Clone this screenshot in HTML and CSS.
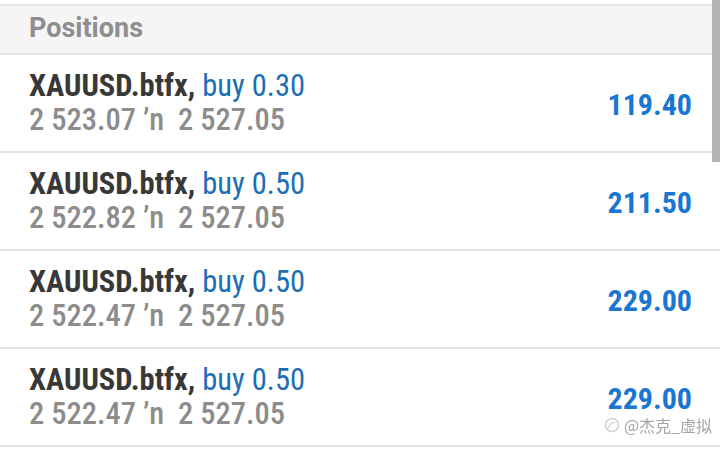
FILE: index.html
```html
<!DOCTYPE html>
<html lang="en">
  <head>
    <meta charset="UTF-8" />
    <meta name="viewport" content="width=device-width, initial-scale=1.0" />
    <title>Positions</title>

    <link rel="stylesheet" href="styles.css">
  </head>

  <body>
    <section class="liste">
      <h2 class="overskrift">Positions</h2>

      <article class="pos">
        <div class="info">
          <p class="linje1"><b>XAUUSD.btfx,</b> <span class="buy">buy 0.30</span></p>
          <p class="linje2">2 523.07 ’n&nbsp; 2 527.05</p>
        </div>
        <p class="profit">119.40</p>
      </article>

      <article class="pos">
        <div class="info">
          <p class="linje1"><b>XAUUSD.btfx,</b> <span class="buy">buy 0.50</span></p>
          <p class="linje2">2 522.82 ’n&nbsp; 2 527.05</p>
        </div>
        <p class="profit">211.50</p>
      </article>

      <article class="pos">
        <div class="info">
          <p class="linje1"><b>XAUUSD.btfx,</b> <span class="buy">buy 0.50</span></p>
          <p class="linje2">2 522.47 ’n&nbsp; 2 527.05</p>
        </div>
        <p class="profit">229.00</p>
      </article>

      <article class="pos">
        <div class="info">
          <p class="linje1"><b>XAUUSD.btfx,</b> <span class="buy">buy 0.50</span></p>
          <p class="linje2">2 522.47 ’n&nbsp; 2 527.05</p>
        </div>
        <p class="profit">229.00</p>
      </article>
    </section>

    <div class="scrollbar"></div>

    <div class="vandmaerke">
      <svg width="16" height="16" viewBox="0 0 16 16">
        <circle cx="8" cy="8" r="6.5" fill="none" stroke="#d4d4d4" stroke-width="1.6" />
        <path d="M4.5 10.5 Q8 3.5 11.5 6" fill="none" stroke="#d4d4d4" stroke-width="1.4" />
      </svg>
      <span>@杰克_虚拟</span>
    </div>
  </body>
</html>
```

FILE: styles.css
```css
body {
  margin: 0;
  background-color: white;
  font-family: "Roboto Condensed", Roboto, sans-serif;
  overflow: hidden;
}
p {
  margin: 0;
}

.liste {
  padding-top: 4px;
}
.overskrift {
  margin: 0;
  height: 47px;
  padding-left: 29px;
  border-top: 2px solid #e4e4e4;
  border-bottom: 2px solid #e4e4e4;
  background-color: #f5f5f5;
  font-family: Roboto, sans-serif;
  font-size: 27px;
  font-weight: bold;
  line-height: 45px;
  color: #8e8e8e;
}

.pos {
  display: flex;
  justify-content: space-between;
  align-items: center;
  height: 96px;
  padding: 0 28px 0 29px;
  border-bottom: 2px solid #e4e4e4;
}
.info {
  font-size: 30.5px;
  line-height: 34px;
}
.linje1 b {
  color: #383838;
}
.buy {
  color: #1d6fb4;
}
.linje2 {
  color: #8c8c8c;
  font-weight: 500;
}
.profit {
  font-size: 30px;
  font-weight: bold;
  color: #1976d2;
  padding-top: 2px;
}

.scrollbar {
  position: fixed;
  top: 0;
  right: 0;
  width: 8px;
  height: 162px;
  background-color: #b3b3b3;
}

.vandmaerke {
  position: fixed;
  right: 8px;
  top: 415px;
  display: flex;
  align-items: center;
  gap: 4px;
  font-family: "Noto Sans CJK SC", sans-serif;
  font-size: 16px;
  line-height: 20px;
  color: #a4a4a4;
  text-shadow: 0 0 2px white;
}
```
